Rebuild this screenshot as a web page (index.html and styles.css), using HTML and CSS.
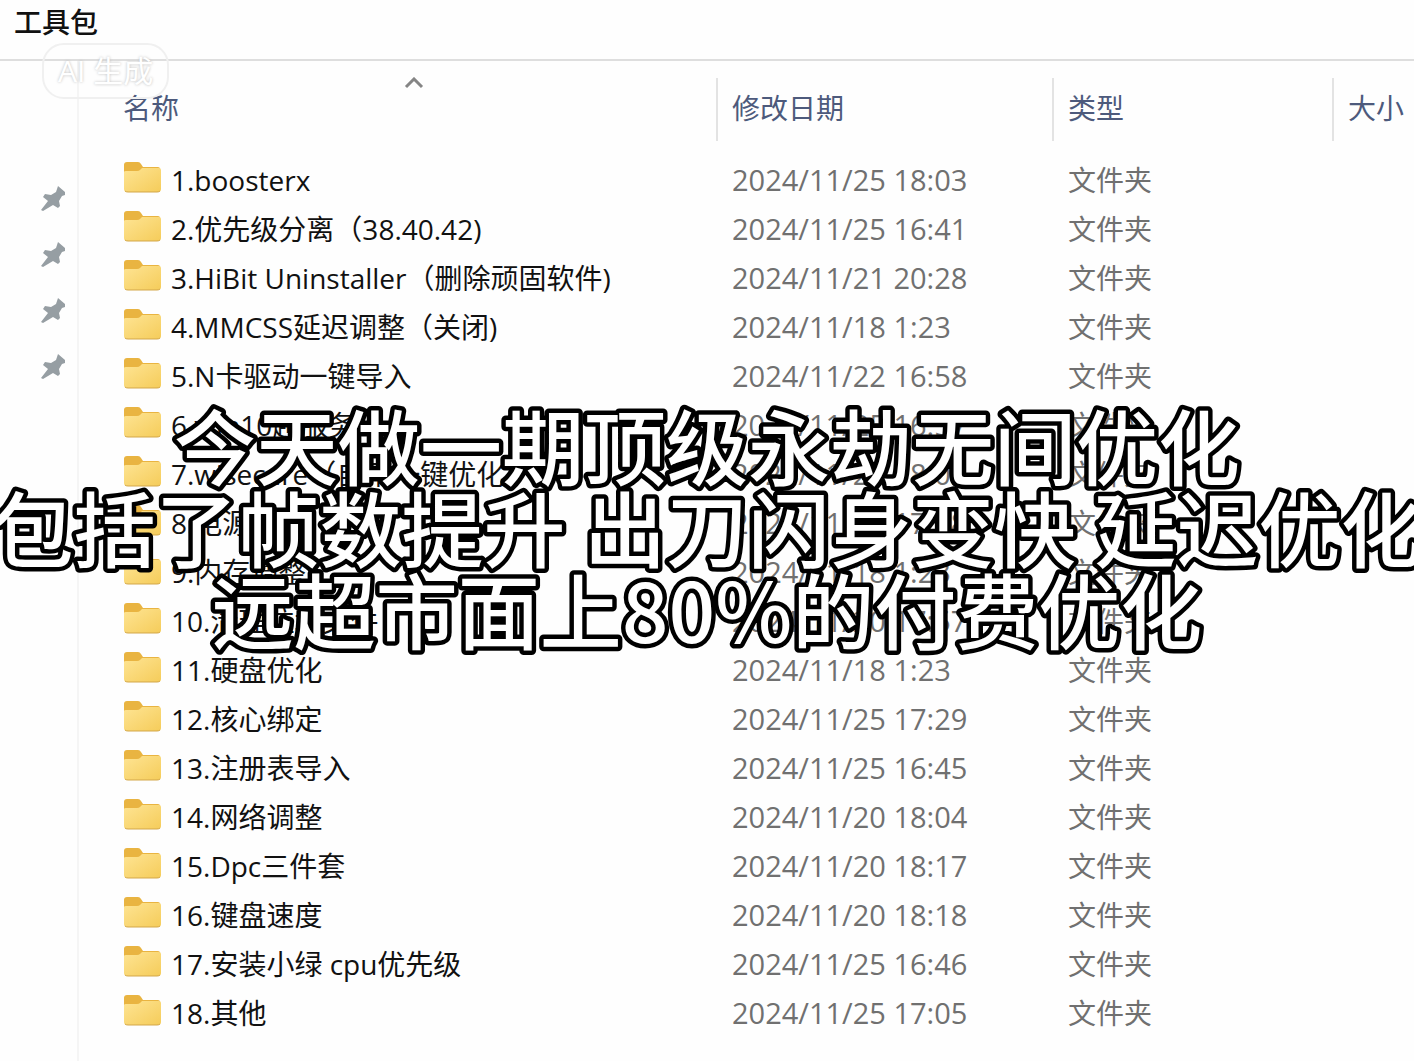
FILE: index.html
```html
<!DOCTYPE html>
<html lang="zh-CN">
<head>
<meta charset="utf-8">
<title>工具包</title>
<link rel="stylesheet" href="styles.css">
</head>
<body>
<svg width="0" height="0" class="defs" aria-hidden="true">
  <defs>
    <linearGradient id="front" x1="0" y1="0" x2="1" y2="1"><stop offset="0" stop-color="#fee493"/><stop offset="1" stop-color="#f5cc5a"/></linearGradient>
    <symbol id="folder" viewBox="0 0 38 32">
      <path d="M1 4a3 3 0 0 1 3-3h11q2 0 3 2l2 3h15a2 2 0 0 1 2 2v8H1z" fill="#e9b441"/>
      <path d="M1 11q0-1 2-1h11q2 0 3-1l2-2h17a2 2 0 0 1 2 2v19a3 3 0 0 1-3 3H4a3 3 0 0 1-3-3z" fill="url(#front)"/>
      <path d="M2 30q1 1 3 1h29q2 0 3-1" fill="none" stroke="#d3a74a" stroke-width="1"/>
    </symbol>
    <symbol id="pin" viewBox="0 0 26 26">
      <path d="M19 0l7 6v3l-3 1-3 5 1 5-2 2-5-3-10 6-2-1 7-9-5-4 2-3 6 1 5-3z" fill="#969ea3"/>
    </symbol>
  </defs>
</svg>
<header class="titlebar"><h1 class="title">工具包</h1></header>
<div class="explorer">
  <nav class="sidebar" aria-label="快速访问">
    <svg class="pin"><use href="#pin"/></svg>
    <svg class="pin"><use href="#pin"/></svg>
    <svg class="pin"><use href="#pin"/></svg>
    <svg class="pin"><use href="#pin"/></svg>
  </nav>
  <main class="content">
    <table class="files">
      <colgroup><col class="c-name"><col class="c-date"><col class="c-type"><col class="c-size"></colgroup>
      <thead><tr>
        <th class="sorted"><svg class="sort" viewBox="0 0 20 12"><path d="M2 10l8-8 8 8" fill="none" stroke="#858585" stroke-width="3"/></svg><span>名称</span></th>
        <th>修改日期</th><th>类型</th><th>大小</th>
      </tr></thead>
      <tbody>
        <tr><td><div class="name"><svg class="folder"><use href="#folder"/></svg>1.boosterx</div></td><td class="date">2024/11/25 18:03</td><td>文件夹</td><td></td></tr>
        <tr><td><div class="name"><svg class="folder"><use href="#folder"/></svg>2.优先级分离（38.40.42)</div></td><td class="date">2024/11/25 16:41</td><td>文件夹</td><td></td></tr>
        <tr><td><div class="name"><svg class="folder"><use href="#folder"/></svg>3.HiBit Uninstaller（删除顽固软件)</div></td><td class="date">2024/11/21 20:28</td><td>文件夹</td><td></td></tr>
        <tr><td><div class="name"><svg class="folder"><use href="#folder"/></svg>4.MMCSS延迟调整（关闭)</div></td><td class="date">2024/11/18 1:23</td><td>文件夹</td><td></td></tr>
        <tr><td><div class="name"><svg class="folder"><use href="#folder"/></svg>5.N卡驱动一键导入</div></td><td class="date">2024/11/22 16:58</td><td>文件夹</td><td></td></tr>
        <tr><td><div class="name"><svg class="folder"><use href="#folder"/></svg>6.win10超服务</div></td><td class="date">2024/11/25 16:57</td><td>文件夹</td><td></td></tr>
        <tr><td><div class="name"><svg class="folder"><use href="#folder"/></svg>7.wisecare（自用一键优化</div></td><td class="date">2024/11/25 18:02</td><td>文件夹</td><td></td></tr>
        <tr><td><div class="name"><svg class="folder"><use href="#folder"/></svg>8.电源优化</div></td><td class="date">2024/11/25 17:08</td><td>文件夹</td><td></td></tr>
        <tr><td><div class="name"><svg class="folder"><use href="#folder"/></svg>9.内存调整</div></td><td class="date">2024/11/18 1:23</td><td>文件夹</td><td></td></tr>
        <tr><td><div class="name"><svg class="folder"><use href="#folder"/></svg>10.清理垃圾文件</div></td><td class="date">2024/11/20 17:57</td><td>文件夹</td><td></td></tr>
        <tr><td><div class="name"><svg class="folder"><use href="#folder"/></svg>11.硬盘优化</div></td><td class="date">2024/11/18 1:23</td><td>文件夹</td><td></td></tr>
        <tr><td><div class="name"><svg class="folder"><use href="#folder"/></svg>12.核心绑定</div></td><td class="date">2024/11/25 17:29</td><td>文件夹</td><td></td></tr>
        <tr><td><div class="name"><svg class="folder"><use href="#folder"/></svg>13.注册表导入</div></td><td class="date">2024/11/25 16:45</td><td>文件夹</td><td></td></tr>
        <tr><td><div class="name"><svg class="folder"><use href="#folder"/></svg>14.网络调整</div></td><td class="date">2024/11/20 18:04</td><td>文件夹</td><td></td></tr>
        <tr><td><div class="name"><svg class="folder"><use href="#folder"/></svg>15.Dpc三件套</div></td><td class="date">2024/11/20 18:17</td><td>文件夹</td><td></td></tr>
        <tr><td><div class="name"><svg class="folder"><use href="#folder"/></svg>16.键盘速度</div></td><td class="date">2024/11/20 18:18</td><td>文件夹</td><td></td></tr>
        <tr><td><div class="name"><svg class="folder"><use href="#folder"/></svg>17.安装小绿 cpu优先级</div></td><td class="date">2024/11/25 16:46</td><td>文件夹</td><td></td></tr>
        <tr><td><div class="name"><svg class="folder"><use href="#folder"/></svg>18.其他</div></td><td class="date">2024/11/25 17:05</td><td>文件夹</td><td></td></tr>
      </tbody>
    </table>
  </main>
</div>
<div class="watermark">AI 生成</div>
<svg class="caption">
  <text x="50%" y="78">今天做一期顶级永劫无间优化</text>
  <text x="50%" y="160">包括了帧数提升 出刀闪身变快 延迟优化</text>
  <text x="50%" y="242">远超市面上80%的付费优化</text>
</svg>
</body>
</html>
```
FILE: styles.css
```css
* { box-sizing: border-box; }

body {
  position: relative;
  display: flex;
  flex-direction: column;
  min-height: 100vh;
  margin: 0;
  overflow: hidden;
  background: #fefefe;
  color: #111;
  font: 28px/36px "Open Sans", "Noto Sans CJK SC", sans-serif;
}

.defs { position: absolute; }

.titlebar {
  height: 61px;
  padding: 4px 14px;
  border-bottom: 2px solid #dedede;
}

.title {
  margin: 0;
  font-size: 28px;
  font-weight: 500;
}

.explorer {
  display: flex;
  flex: 1;
}

.sidebar {
  display: flex;
  flex: none;
  flex-direction: column;
  align-items: flex-end;
  gap: 30px;
  width: 79px;
  padding: 125px 12px 0 0;
  border-right: 2px solid #f5f5f5;
}

.pin { width: 26px; height: 26px; }

.content { flex: 1; min-width: 0; }

.files {
  width: 100%;
  table-layout: fixed;
  border-collapse: collapse;
}

.c-name { width: 637px; }
.c-date { width: 336px; }
.c-type { width: 280px; }

th {
  height: 94px;
  padding: 0 0 0 16px;
  background: linear-gradient(#e3e3e3, #e3e3e3) 0 17px / 2px 63px no-repeat;
  color: #4d5a7c;
  font-weight: 400;
  text-align: left;
  white-space: nowrap;
}

th.sorted {
  position: relative;
  padding-left: 44px;
  background: none;
}

.sort {
  position: absolute;
  top: 16px;
  left: 51%;
  width: 20px;
  height: 12px;
}

td {
  height: 49px;
  padding: 0 0 0 16px;
  color: #707070;
  white-space: nowrap;
}

td:first-child {
  padding-left: 44px;
  color: #111;
}

.date { font-size: 29px; }

.name {
  display: flex;
  align-items: center;
  gap: 10px;
}

.folder {
  width: 38px;
  height: 32px;
  margin-bottom: 6px;
}

.watermark {
  position: absolute;
  top: 43px;
  left: 42px;
  padding: 8px 14px;
  border: 2px solid #f0f0f0;
  border-radius: 22px;
  color: #fff;
  font-size: 30px;
  text-shadow: 0 0 3px #bbb;
}

.caption {
  position: absolute;
  top: 401px;
  left: 0;
  width: 100%;
  height: 264px;
  fill: #fff;
  stroke: #000;
  stroke-width: 9px;
  stroke-linejoin: round;
  paint-order: stroke;
  font: 500 82px/82px "Noto Sans CJK SC", sans-serif;
  text-anchor: middle;
}
```
